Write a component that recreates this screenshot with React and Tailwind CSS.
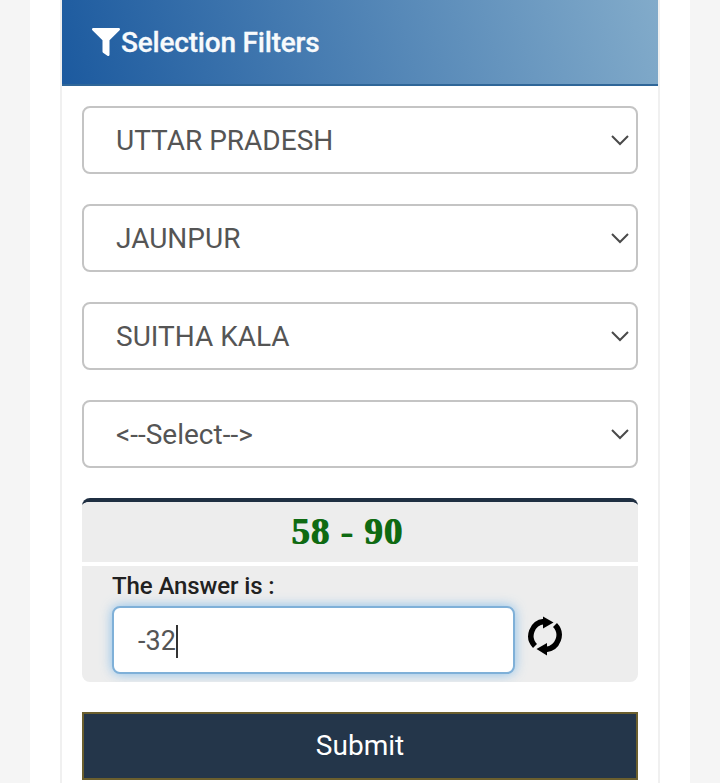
import { FaFilter } from 'react-icons/fa';

const SELECTS = [
  { value: 'UTTAR PRADESH' },
  { value: 'JAUNPUR' },
  { value: 'SUITHA KALA' },
  { value: '<--Select-->' },
];

function SelectBox({ value }) {
  return (
    <div className="relative h-[68px]">
      <select
        defaultValue={value}
        className="h-full w-full appearance-none rounded-lg border-2 border-[#c4c4c4] bg-white pl-[32px] pr-12 pt-[2px] text-[28px] text-[#555555] outline-none"
      >
        <option>{value}</option>
      </select>
      <svg
        viewBox="0 0 20 12"
        className="pointer-events-none absolute right-[8px] top-[28px] h-[12px] w-[20px]"
        fill="none"
        stroke="#4a4a4a"
        strokeWidth="2"
      >
        <path d="M2 2l8 8 8-8" />
      </svg>
    </div>
  );
}

function RefreshIcon() {
  return (
    <svg viewBox="0 0 34 40" className="mb-[8px] h-[40px] w-[34px]" fill="none">
      <path d="M16 5.5A14.5 14.5 0 0 0 7 30" stroke="#000" strokeWidth="5.5" />
      <path d="M18 33.5A14.5 14.5 0 0 0 27 9" stroke="#000" strokeWidth="5.5" />
      <path d="M15 0.5L25.5 6.5L15 12.5Z" fill="#000" />
      <path d="M19 27L8.5 33L19 39.5Z" fill="#000" />
    </svg>
  );
}

export default function App() {
  return (
    <div className="h-[783px] overflow-hidden bg-[#f5f5f5] px-[30px] font-['Roboto',sans-serif]">
      <div className="h-full bg-white px-[30px]">
        <div className="h-full border-x-2 border-[#f0f0f0]">
          <div className="flex h-[86px] items-center gap-px border-b-2 border-[#2f6698] bg-[linear-gradient(74deg,#1c5a9f,#82abca)] pl-[30px]">
            <FaFilter className="h-[28px] w-[28px] text-white" />
            <h2 className="pt-[2px] text-[28px] font-medium tracking-[-0.2px] text-[#f7fafc] [-webkit-text-stroke:0.3px_#f7fafc]">Selection Filters</h2>
          </div>

          <div className="flex flex-col px-[20px] pt-[20px]">
            <div className="flex flex-col gap-[30px]">
              {SELECTS.map((s) => (
                <SelectBox key={s.value} value={s.value} />
              ))}
            </div>

            <div className="mt-[30px] overflow-hidden rounded-lg border-t-4 border-[#1f2f42]">
              <div className="flex h-[60px] items-center justify-center bg-[#ededed] pr-[26px] font-['Liberation_Serif',serif] text-[37px] font-bold tracking-[1px] text-[#0f6a12] [text-shadow:1px_0_#0f6a12]">
                58 - 90
              </div>
              <div className="mt-[4px] h-[116px] bg-[#ededed] pl-[30px]">
                <div className="pt-[5px] text-[24px] leading-[30px] font-medium tracking-[-0.1px] text-[#212121]">The Answer is :</div>
                <div className="mt-[5px] flex items-center gap-[13px]">
                  <div className="flex h-[68px] w-[403px] items-center rounded-lg border-2 border-[#7fb0d8] bg-white pl-[24px] pt-[2px] text-[27px] text-[#555555] shadow-[0_0_12px_rgba(102,175,233,0.75)]">
                    -32
                    <span className="h-[33px] w-[2px] bg-[#333333]" />
                  </div>
                  <RefreshIcon />
                </div>
              </div>
            </div>

            <button
              type="button"
              className="mt-[30px] h-[68px] w-full border-2 border-[#6b5f2e] bg-[#24364a] text-[28px] text-white"
            >
              Submit
            </button>
          </div>
        </div>
      </div>
    </div>
  );
}
